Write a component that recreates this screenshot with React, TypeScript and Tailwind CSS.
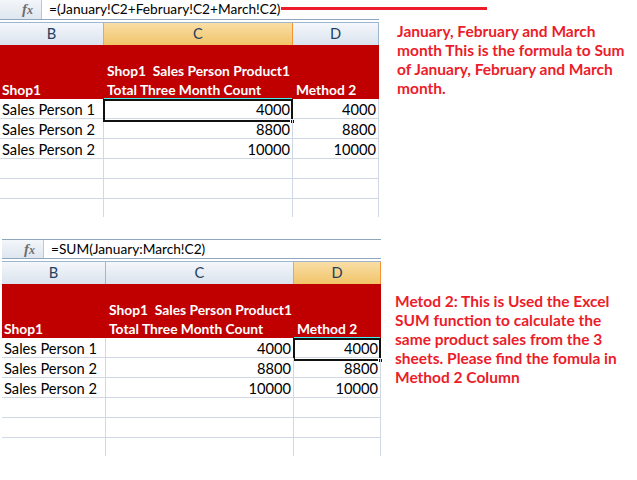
type SheetProps = {
  formula: string;
  cols: [number, number, number];
  active: "C" | "D";
  selected: "C" | "D";
  topBorder?: boolean;
};

const rows = [
  ["Sales Person 1", "4000", "4000"],
  ["Sales Person 2", "8800", "8800"],
  ["Sales Person 2", "10000", "10000"],
  ["", "", ""],
  ["", "", ""],
];

function Selection() {
  return (
    <>
      <div className="absolute -top-[1px] left-0 right-0 h-[1px] bg-[#44f0f0]" />
      <div className="absolute -left-[1px] top-0 -right-[1px] -bottom-[1px] border-2 border-[#111]" />
      <div className="absolute -right-[3px] -bottom-[3px] h-[5px] w-[5px] border border-white bg-[#111]" />
    </>
  );
}

function Sheet({ formula, cols, active, selected, topBorder }: SheetProps) {
  const grid = { gridTemplateColumns: `${cols[0]}px ${cols[1]}px ${cols[2]}px` };
  const width = cols[0] + cols[1] + cols[2];
  const hdr = (k: string) =>
    k === active
      ? "bg-gradient-to-b from-[#f9dea6] to-[#f1c467] border-[#f29436] border-b-[#f29436]"
      : "bg-gradient-to-b from-[#f4f7fb] to-[#dbe3ee] border-[#9eb6ce]";
  return (
    <div style={{ width }}>
      {/* formula bar */}
      <div className={`flex h-[20px] border-b border-[#8fa6bf] ${topBorder ? "border-t" : ""}`}>
        <div className="flex w-[42px] items-center justify-end border-r border-[#b9c8d8] bg-gradient-to-b from-[#f3f6fa] to-[#dfe6ef] pr-[8px]">
          <span className="font-['Liberation_Serif',serif] text-[15px] font-bold italic leading-none text-[#6e6e6e]">
            f<span className="text-[12px]">x</span>
          </span>
        </div>
        <div className="flex items-center pl-[7px] text-[13.7px] text-black">{formula}</div>
      </div>
      <div className="h-[2px]" />
      {/* column headers */}
      <div className="grid h-[22px] border-y border-[#9eb6ce]" style={grid}>
        {["B", "C", "D"].map((k) => (
          <div
            key={k}
            className={`flex items-center justify-center border-r text-[14.67px] text-[#24405e] ${hdr(k)}`}
          >
            {k}
          </div>
        ))}
      </div>
      {/* red header */}
      <div className="grid h-[55px] bg-[#c00000] text-[13.8px] font-bold leading-[19px] text-white" style={grid}>
        <div className="flex items-end pl-[2px]">Shop1</div>
        <div className="flex flex-col justify-end whitespace-pre pl-[3px]">
          <span>Shop1  Sales Person Product1</span>
          <span>Total Three Month Count</span>
        </div>
        <div className="flex items-end whitespace-nowrap pl-[3px]">Method 2</div>
      </div>
      {/* data rows */}
      {rows.map((r, i) => (
        <div key={i} className="grid h-[20px] border-b border-[#d0d7e5] text-[14.67px] text-black" style={grid}>
          <div className="flex items-center border-r border-[#d0d7e5] pl-[2px]">{r[0]}</div>
          <div className="relative flex items-center justify-end border-r border-[#d0d7e5] pr-[2px]">
            {r[1]}
            {i === 0 && selected === "C" && <Selection />}
          </div>
          <div className="relative flex items-center justify-end border-r border-[#d0d7e5] pr-[2px]">
            {r[2]}
            {i === 0 && selected === "D" && <Selection />}
          </div>
        </div>
      ))}
      <div className="grid h-[18px]" style={grid}>
        <div className="border-r border-[#d0d7e5]" />
        <div className="border-r border-[#d0d7e5]" />
        <div className="border-r border-[#d0d7e5]" />
      </div>
    </div>
  );
}

export default function App() {
  return (
    <div className="relative h-[480px] w-[637px] overflow-hidden bg-white font-['Lato',sans-serif]">
      {/* TOP: formula with + */}
      <section className="flex">
        <Sheet
          formula="=(January!C2+February!C2+March!C2)"
          cols={[104, 189, 86]}
          active="C"
          selected="C"
        />
        <p className="w-[250px] pl-[18px] pt-[22px] text-[15.5px] font-bold leading-[19px] text-[#ec1c2a]">
          January, February and March month This is the formula to Sum of January, February and March month.
        </p>
      </section>

      {/* red pointer line */}
      <div className="absolute left-[281px] top-[7px] h-[3px] w-[206px] bg-[#ec1c2a]" />

      {/* BOTTOM: SUM over sheets */}
      <section className="mt-[22px] flex">
        <div className="pl-[2px]">
          <Sheet
            formula="=SUM(January:March!C2)"
            cols={[104, 188, 87]}
            active="D"
            selected="D"
            topBorder
          />
        </div>
        <p className="w-[250px] pl-[14px] pt-[53px] text-[15.5px] font-bold leading-[19px] text-[#ec1c2a]">
          Metod 2: This is Used the Excel SUM function to calculate the same product sales from the 3 sheets. Please find the fomula in Method 2 Column
        </p>
      </section>
    </div>
  );
}
